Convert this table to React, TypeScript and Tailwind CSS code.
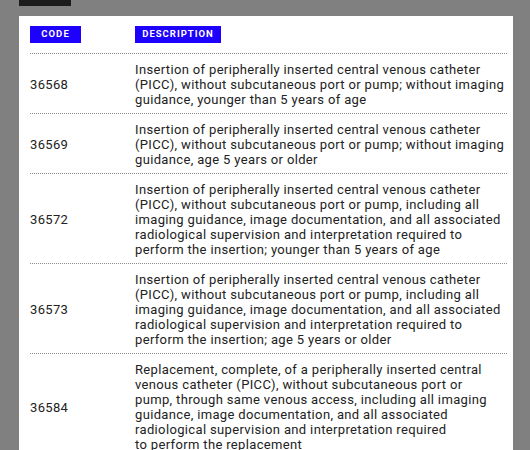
const rows: { code: string; lines: string[] }[] = [
  {
    code: '36568',
    lines: [
      'Insertion of peripherally inserted central venous catheter',
      '(PICC), without subcutaneous port or pump; without imaging',
      'guidance, younger than 5 years of age',
    ],
  },
  {
    code: '36569',
    lines: [
      'Insertion of peripherally inserted central venous catheter',
      '(PICC), without subcutaneous port or pump; without imaging',
      'guidance, age 5 years or older',
    ],
  },
  {
    code: '36572',
    lines: [
      'Insertion of peripherally inserted central venous catheter',
      '(PICC), without subcutaneous port or pump, including all',
      'imaging guidance, image documentation, and all associated',
      'radiological supervision and interpretation required to',
      'perform the insertion; younger than 5 years of age',
    ],
  },
  {
    code: '36573',
    lines: [
      'Insertion of peripherally inserted central venous catheter',
      '(PICC), without subcutaneous port or pump, including all',
      'imaging guidance, image documentation, and all associated',
      'radiological supervision and interpretation required to',
      'perform the insertion; age 5 years or older',
    ],
  },
  {
    code: '36584',
    lines: [
      'Replacement, complete, of a peripherally inserted central',
      'venous catheter (PICC), without subcutaneous port or',
      'pump, through same venous access, including all imaging',
      'guidance, image documentation, and all associated',
      'radiological supervision and interpretation required',
      'to perform the replacement',
    ],
  },
];

export default function App() {
  return (
    <div className="w-[530px] h-[450px] overflow-hidden bg-[#808080] pl-[19px] pr-[17px] font-['Roboto',sans-serif]">
      <div className="w-[52px] h-[16px] -mt-[10px] bg-[#1c1c1c] text-white text-[9px] font-bold tracking-[1.5px] flex items-center justify-center">
        TABLE 5
      </div>
      <div className="mt-[10px] bg-white pl-[11px] pr-[6px] pt-[10px] h-[500px]">
        <div className="flex pb-[10px]">
          <div className="w-[105px]">
            <div className="w-[51px] h-[17px] bg-[#1e00ff] text-white text-[9.5px] font-bold tracking-[1.1px] flex items-center justify-center">
              CODE
            </div>
          </div>
          <div className="w-[86px] h-[17px] bg-[#1e00ff] text-white text-[9.5px] font-bold tracking-[1px] flex items-center justify-center">
            DESCRIPTION
          </div>
        </div>
        {rows.map((r) => (
          <div key={r.code} className="flex items-center border-t border-dotted border-[#8a8a8a] pt-[8px] pb-[6px] text-[13px] leading-[15px] tracking-[0.35px] text-[#222]">
            <div className="w-[105px]">{r.code}</div>
            <div>
              {r.lines.map((l, i) => (
                <div key={i} className="whitespace-nowrap">{l}</div>
              ))}
            </div>
          </div>
        ))}
      </div>
    </div>
  );
}
